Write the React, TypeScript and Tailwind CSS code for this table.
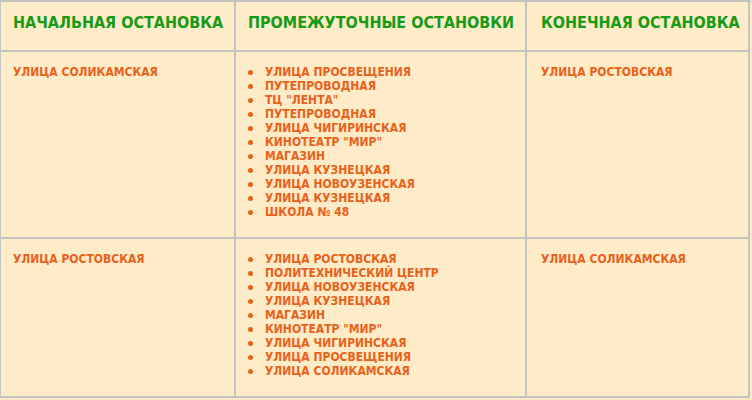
const head = ['НАЧАЛЬНАЯ ОСТАНОВКА', 'ПРОМЕЖУТОЧНЫЕ ОСТАНОВКИ', 'КОНЕЧНАЯ ОСТАНОВКА']

const routes = [
  {
    from: 'УЛИЦА СОЛИКАМСКАЯ',
    to: 'УЛИЦА РОСТОВСКАЯ',
    stops: [
      'УЛИЦА ПРОСВЕЩЕНИЯ',
      'ПУТЕПРОВОДНАЯ',
      'ТЦ "ЛЕНТА"',
      'ПУТЕПРОВОДНАЯ',
      'УЛИЦА ЧИГИРИНСКАЯ',
      'КИНОТЕАТР "МИР"',
      'МАГАЗИН',
      'УЛИЦА КУЗНЕЦКАЯ',
      'УЛИЦА НОВОУЗЕНСКАЯ',
      'УЛИЦА КУЗНЕЦКАЯ',
      'ШКОЛА № 48',
    ],
  },
  {
    from: 'УЛИЦА РОСТОВСКАЯ',
    to: 'УЛИЦА СОЛИКАМСКАЯ',
    stops: [
      'УЛИЦА РОСТОВСКАЯ',
      'ПОЛИТЕХНИЧЕСКИЙ ЦЕНТР',
      'УЛИЦА НОВОУЗЕНСКАЯ',
      'УЛИЦА КУЗНЕЦКАЯ',
      'МАГАЗИН',
      'КИНОТЕАТР "МИР"',
      'УЛИЦА ЧИГИРИНСКАЯ',
      'УЛИЦА ПРОСВЕЩЕНИЯ',
      'УЛИЦА СОЛИКАМСКАЯ',
    ],
  },
]

const cell = 'border-r-2 border-b-2 border-[#c3c3c3]'
const body = 'text-[12px] leading-[14px] font-bold text-[#e8621a] pt-[13px] pb-[18px]'

export default function App() {
  return (
    <div
      className="w-[752px] h-[400px] bg-[#fdeac6] overflow-hidden"
      style={{ fontFamily: '"DejaVu Sans Condensed", "DejaVu Sans", Verdana, sans-serif' }}
    >
      <div className="grid grid-cols-[235px_291px_223px] w-[751px] border-t-2 border-l border-[#c3c3c3] bg-[#feebc8]">
        {head.map((h, i) => (
          <div
            key={h}
            className={`${cell} h-[50px] pt-[11px] text-[16px] leading-[19px] font-bold text-[#159b15] ${i === 2 ? 'pl-[14px]' : 'pl-3'}`}
          >
            {h}
          </div>
        ))}
        {routes.map((r) => (
          <div key={r.from} className="contents">
            <div className={`${cell} ${body} pl-3`}>{r.from}</div>
            <div className={`${cell} ${body}`}>
              <ul>
                {r.stops.map((s, i) => (
                  <li key={i} className="flex items-center">
                    <span className="w-[5px] h-[5px] rounded-full bg-[#e8621a] ml-[12px] mr-[12px] shrink-0" />
                    <span>{s}</span>
                  </li>
                ))}
              </ul>
            </div>
            <div className={`${cell} ${body} pl-[14px]`}>{r.to}</div>
          </div>
        ))}
      </div>
    </div>
  )
}
